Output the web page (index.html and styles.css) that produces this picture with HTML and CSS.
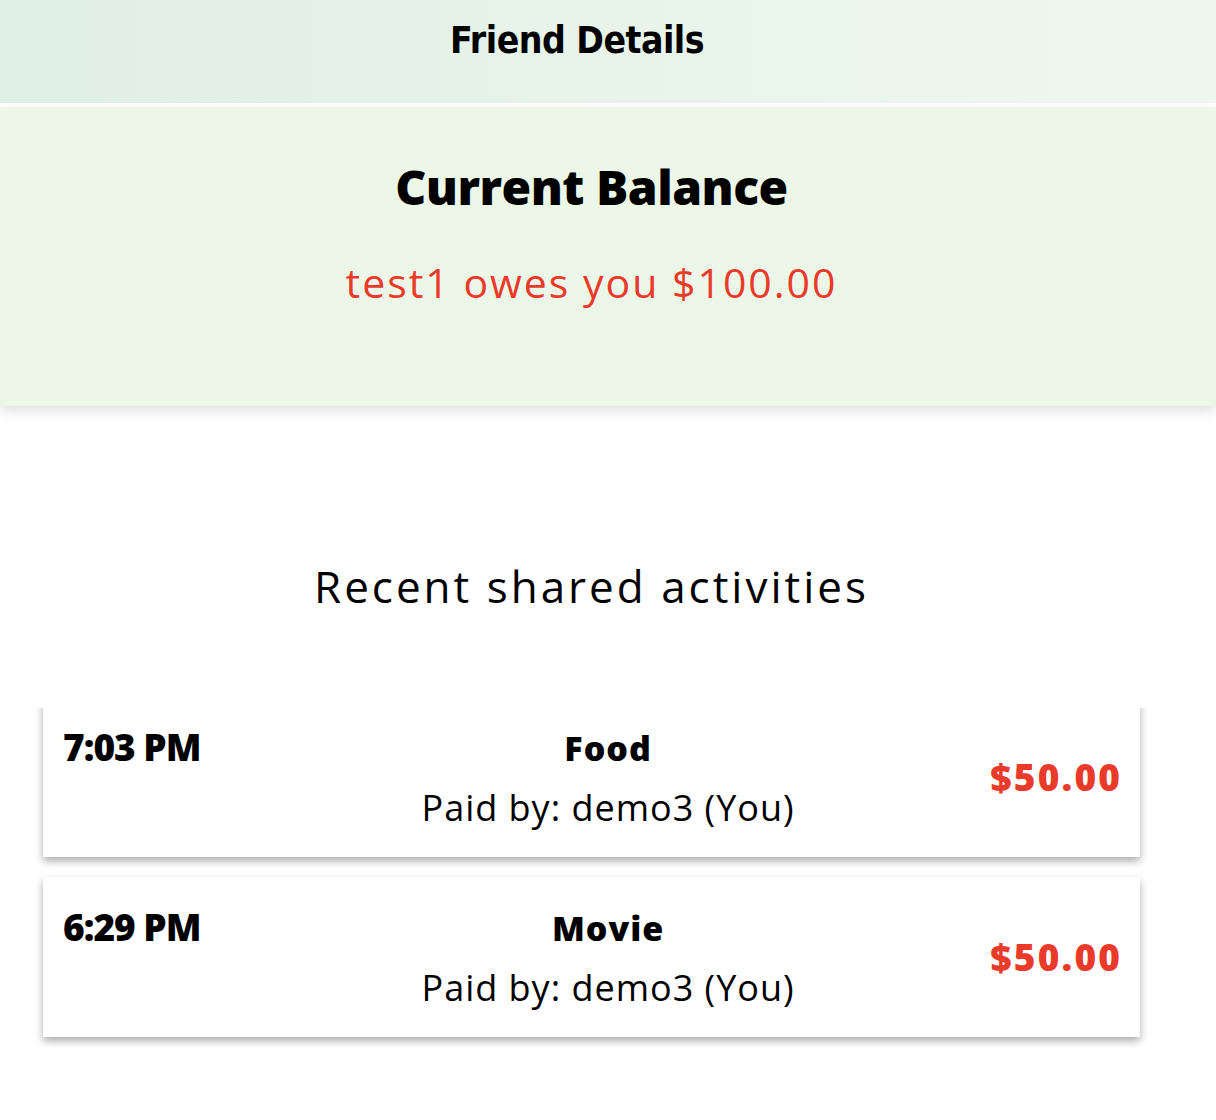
FILE: index.html
```html
<!DOCTYPE html>
<html>
<head>
<meta charset="utf-8">
<link rel="stylesheet" href="styles.css">
</head>
<body>
<header class="topbar">
  <h1 class="topbar-title">Friend Details</h1>
</header>
<section class="balance">
  <h2 class="balance-title">Current Balance</h2>
  <p class="balance-text">test1 owes you $100.00</p>
</section>
<main class="content">
  <h2 class="section-title">Recent shared activities</h2>
  <div class="activity-viewport">
    <div class="activity-list">
      <div class="activity-card">
        <div class="activity-time">7:03 PM</div>
        <div class="activity-info">
          <div class="activity-name">Food</div>
          <div class="activity-payer">Paid by: demo3 (You)</div>
        </div>
        <div class="activity-amount">$50.00</div>
      </div>
      <div class="activity-card">
        <div class="activity-time">6:29 PM</div>
        <div class="activity-info">
          <div class="activity-name">Movie</div>
          <div class="activity-payer">Paid by: demo3 (You)</div>
        </div>
        <div class="activity-amount">$50.00</div>
      </div>
    </div>
  </div>
</main>
</body>
</html>
```

FILE: styles.css
```css
* { box-sizing: border-box; }
html, body { margin: 0; padding: 0; background: #ffffff; }
body {
  font-family: "Open Sans", "Noto Sans", sans-serif;
  color: #000;
  width: 1216px;
  height: 1120px;
  overflow: hidden;
}
.topbar {
  height: 103px;
  background: linear-gradient(90deg, #dfeee7 0%, #e8f4ea 50%, #eef7ed 100%);
  display: flex;
  justify-content: center;
  padding: 19px 62px 0 0;
}
.topbar-title {
  margin: 0;
  font-family: "DejaVu Sans Condensed", "DejaVu Sans", sans-serif;
  font-stretch: condensed;
  font-weight: 700;
  font-size: 37px;
  line-height: 44px;
  letter-spacing: -0.5px;
}
.balance {
  margin-top: 4px;
  height: 299px;
  background: #ecf7e8;
  box-shadow: 0 5px 12px rgba(0, 0, 0, 0.12);
  text-align: center;
  padding: 50px 33px 0 0;
  position: relative;
}
.balance-title {
  margin: 0;
  font-weight: 800;
  font-size: 48px;
  line-height: 60px;
  letter-spacing: -0.5px;
}
.balance-text {
  margin: 37px 0 0;
  color: #ea3a2a;
  font-weight: 500;
  font-size: 41px;
  line-height: 56px;
  letter-spacing: 2px;
}
.content {
  width: 1183px;
}
.section-title {
  margin: 148px 0 0;
  text-align: center;
  font-weight: 500;
  font-size: 44px;
  line-height: 64px;
  letter-spacing: 3px;
}
.activity-viewport {
  margin-top: 90px;
  padding: 0 43px 40px;
  overflow: hidden;
  height: 412px;
}
.activity-list {
  margin-top: -11px;
  display: flex;
  flex-direction: column;
  gap: 20px;
}
.activity-card {
  height: 160px;
  background: #fff;
  box-shadow: 0 4px 8px rgba(0, 0, 0, 0.33);
  display: flex;
  justify-content: space-between;
  align-items: center;
  padding: 0 20px;
}
.activity-time {
  align-self: flex-start;
  padding-top: 28px;
  font-weight: 800;
  font-size: 37px;
  line-height: 44px;
  letter-spacing: -1px;
  width: 200px;
}
.activity-info {
  align-self: flex-start;
  padding-top: 29px;
  text-align: center;
  margin-left: 31px;
}
.activity-name {
  font-weight: 800;
  font-size: 34px;
  line-height: 44px;
  letter-spacing: 1px;
}
.activity-payer {
  margin-top: 16px;
  font-weight: 500;
  font-size: 36px;
  line-height: 44px;
  letter-spacing: 1px;
}
.activity-amount {
  color: #ea3a2a;
  font-weight: 800;
  font-size: 37px;
  line-height: 44px;
  letter-spacing: 2.2px;
  width: 200px;
  text-align: right;
  margin-right: -2.2px;
}
```
